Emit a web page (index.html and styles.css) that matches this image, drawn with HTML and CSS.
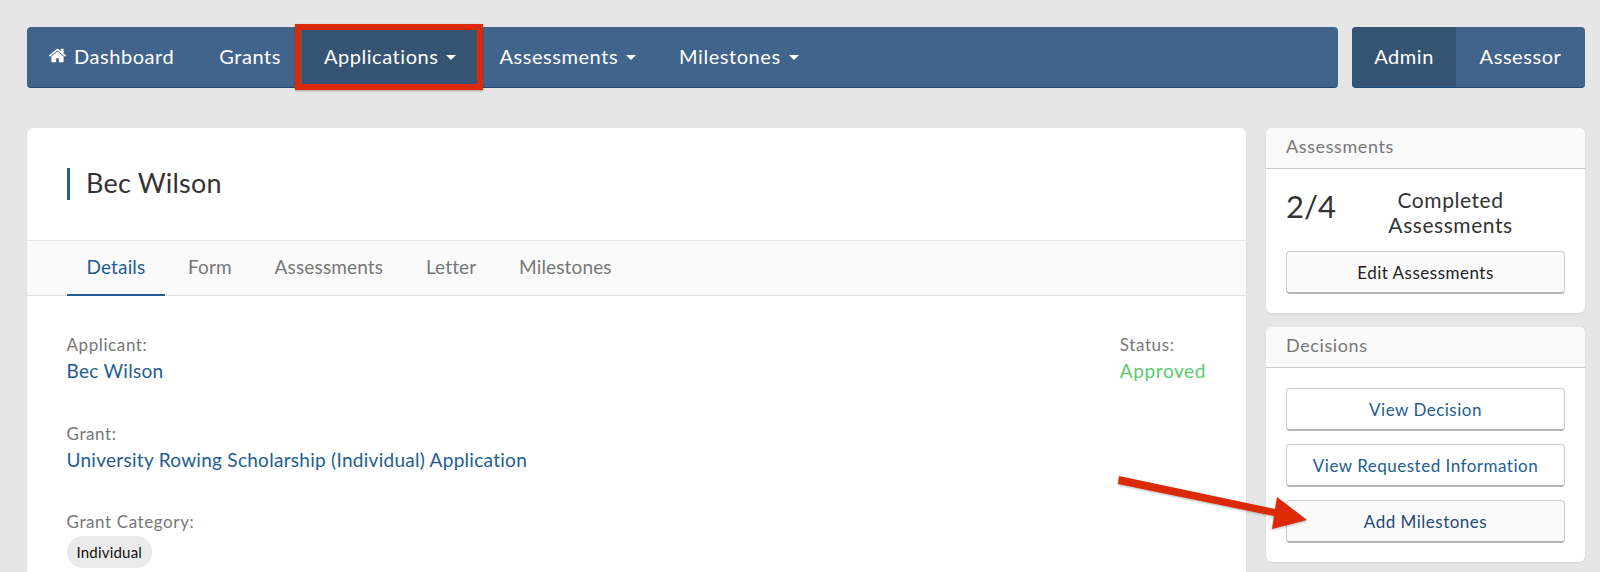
FILE: index.html
```html
<!DOCTYPE html>
<html lang="en">
<head>
  <meta charset="UTF-8" />
  <title>Bec Wilson - Application</title>
  <link rel="stylesheet" href="styles.css">
</head>
<body>
  <header class="topbar">
    <nav class="navbar navbar-main">
      <a class="nav-item nav-item-home" href="#">
        <svg class="icon-home" viewBox="0 0 1792 1792"><path d="M1472 992v480q0 26-19 45t-45 19h-384v-384h-256v384h-384q-26 0-45-19t-19-45v-480q0-1 .5-3t.5-3l575-474 575 474q1 2 1 6zm223-69l-62 74q-8 9-21 11h-3q-13 0-21-7l-692-577-692 577q-12 8-24 7-13-2-21-11l-62-74q-8-10-7-23.500t11-21.500l719-599q32-26 76-26t76 26l244 204v-195q0-14 9-23t23-9h192q14 0 23 9t9 23v408l219 182q10 8 11 21.500t-7 23.500z"/></svg>
        <span>Dashboard</span>
      </a>
      <a class="nav-item" href="#"><span>Grants</span></a>
      <a class="nav-item active highlighted" href="#"><span>Applications</span> <span class="caret"></span></a>
      <a class="nav-item" href="#"><span>Assessments</span> <span class="caret"></span></a>
      <a class="nav-item" href="#"><span>Milestones</span> <span class="caret"></span></a>
    </nav>
    <nav class="navbar navbar-role">
      <a class="nav-item active" href="#"><span>Admin</span></a>
      <a class="nav-item" href="#"><span>Assessor</span></a>
    </nav>
  </header>

  <div class="content">
    <main class="card card-main">
      <div class="page-title"><h1>Bec Wilson</h1></div>
      <ul class="tabs">
        <li class="tab active">Details</li>
        <li class="tab">Form</li>
        <li class="tab">Assessments</li>
        <li class="tab">Letter</li>
        <li class="tab">Milestones</li>
      </ul>
      <div class="details">
        <div class="details-left">
          <div class="field">
            <div class="field-label">Applicant:</div>
            <a class="field-link" href="#">Bec Wilson</a>
          </div>
          <div class="field">
            <div class="field-label">Grant:</div>
            <a class="field-link" href="#">University Rowing Scholarship (Individual) Application</a>
          </div>
          <div class="field">
            <div class="field-label">Grant Category:</div>
            <span class="pill">Individual</span>
          </div>
        </div>
        <div class="field">
          <div class="field-label">Status:</div>
          <div class="status-approved">Approved</div>
        </div>
      </div>
    </main>

    <aside class="sidebar">
      <section class="card">
        <h2 class="card-header">Assessments</h2>
        <div class="card-body card-body-summary">
          <div class="summary">
            <span class="summary-count">2/4</span>
            <span class="summary-text">Completed Assessments</span>
          </div>
          <a class="btn btn-dark" href="#">Edit Assessments</a>
        </div>
      </section>
      <section class="card">
        <h2 class="card-header">Decisions</h2>
        <div class="card-body card-body-buttons">
          <a class="btn" href="#">View Decision</a>
          <a class="btn" href="#">View Requested Information</a>
          <a class="btn btn-hover" href="#">Add Milestones</a>
        </div>
      </section>
    </aside>
  </div>

  <svg class="arrow" viewBox="0 0 1600 572" width="1600" height="572">
    <polygon points="1119,476 1275,509 1277,497 1307,520 1272,529 1274,516 1118,484" fill="#dc2a06"/>
  </svg>
</body>
</html>
```

FILE: styles.css
```css
* {
  box-sizing: border-box;
}

html, body {
  height: 100%;
}

body {
  position: relative;
  margin: 0;
  padding: 27px 15px 0 27px;
  overflow: hidden;
  background: #e6e6e6;
  font-family: Lato, "Open Sans", sans-serif;
  font-size: 18px;
  color: #333;
}

a {
  text-decoration: none;
}

.topbar {
  display: flex;
  gap: 14px;
}

.navbar {
  display: flex;
  height: 61px;
  background: #41648c;
  border-radius: 4px;
  border-bottom: 1px solid #1d4a78;
}

.navbar-main {
  flex: 1;
}

.navbar-role {
  width: 233px;
  overflow: hidden;
}

.nav-item {
  position: relative;
  display: flex;
  align-items: center;
  gap: 7px;
  padding: 0 21px 3px 22px;
  color: #fff;
  font-size: 20px;
  letter-spacing: 0.55px;
  white-space: nowrap;
}

.nav-item-home {
  padding: 0 23px 3px 21px;
}

.nav-item.active {
  background: #355474;
}

.navbar-role .nav-item {
  flex: 1;
  justify-content: center;
  padding: 0 0 3px;
}

.navbar-role .nav-item.active {
  flex: 0 0 104px;
}

.highlighted::after {
  content: "";
  position: absolute;
  top: -3px;
  bottom: -3px;
  left: -7px;
  right: -6px;
  border: 6px solid #dc2a06;
  box-shadow: 0 1px 2px rgba(0, 0, 0, 0.3);
}

.icon-home {
  width: 19px;
  height: 19px;
  fill: #fff;
}

.caret {
  width: 0;
  height: 0;
  margin-left: 1px;
  margin-top: 4px;
  border-left: 5px solid transparent;
  border-right: 5px solid transparent;
  border-top: 5px solid #fff;
}

.content {
  display: flex;
  gap: 20px;
  margin-top: 40px;
}

.card {
  background: #fff;
  border-radius: 6px;
  box-shadow: 0 1px 2px rgba(0, 0, 0, 0.08);
  overflow: hidden;
}

.card-main {
  flex: 1;
  height: 444px;
  border-radius: 6px 6px 0 0;
}

.page-title {
  height: 112px;
  padding: 40px 40px 0;
}

.page-title h1 {
  margin: 0;
  height: 32px;
  padding-left: 16px;
  border-left: 3px solid #235d92;
  font-size: 27px;
  font-weight: 400;
  letter-spacing: 0.2px;
  line-height: 30px;
  color: #333;
}

.tabs {
  display: flex;
  gap: 3.700px;
  height: 56px;
  margin: 0;
  padding: 0 0 0 40px;
  list-style: none;
  background: #fafafa;
  border-top: 1px solid #e6e6e6;
  border-bottom: 1px solid #e0e0e0;
}

.tab {
  padding: 14px 19.500px 0;
  color: #777;
  font-size: 19px;
  letter-spacing: 0.15px;
}

.tab.active {
  color: #235d92;
  border-bottom: 2px solid #235d92;
  margin-bottom: -1px;
}

.details {
  display: flex;
  justify-content: space-between;
  padding: 36px 40px 0 39.500px;
}

.field {
  margin-bottom: 36.500px;
}

.field-label {
  height: 26px;
  color: #777;
  font-size: 17px;
  letter-spacing: 0.6px;
  line-height: 26px;
}

.field-link, .status-approved {
  display: block;
  height: 26px;
  font-size: 19px;
  letter-spacing: 0.28px;
  line-height: 26px;
}

.field-link {
  color: #235d92;
}

.status-approved {
  color: #5ccb70;
  letter-spacing: 0.6px;
}

.pill {
  display: inline-block;
  height: 32px;
  margin-top: 1px;
  padding: 0 10px;
  background: #ebebeb;
  border-radius: 16px;
  color: #111;
  font-size: 15px;
  letter-spacing: 0.2px;
  line-height: 32px;
}

.sidebar {
  display: flex;
  flex-direction: column;
  gap: 14px;
  width: 319px;
}

.card-header {
  height: 41px;
  margin: 0;
  padding: 0 20px;
  background: #fafafa;
  border-bottom: 1px solid #ccc;
  color: #777;
  font-size: 18px;
  font-weight: 400;
  letter-spacing: 0.6px;
  line-height: 37px;
}

.card-body {
  padding: 20px 20px 19px;
}

.card-body-buttons {
  display: flex;
  flex-direction: column;
  gap: 13px;
}

.summary {
  display: flex;
  align-items: center;
  height: 48px;
  margin-bottom: 14px;
}

.summary-count {
  width: 60px;
  padding-bottom: 14px;
  font-size: 31px;
}

.summary-text {
  flex: 1;
  padding: 0 30px 2px 20px;
  text-align: center;
  font-size: 21px;
  letter-spacing: 0.55px;
  line-height: 25px;
}

.btn {
  display: block;
  height: 43px;
  background: #fff;
  border: 1px solid #ccc;
  border-bottom: 2px solid #b5b5b5;
  border-radius: 4px;
  color: #235d92;
  font-size: 17px;
  letter-spacing: 0.5px;
  line-height: 41px;
  text-align: center;
}

.btn-dark {
  background: #fafafa;
  color: #222;
}

.btn-hover {
  background: #fafafa;
  color: #1d4a78;
}

.arrow {
  position: absolute;
  top: 0;
  left: 0;
  pointer-events: none;
  filter: drop-shadow(0 1px 1px rgba(0, 0, 0, 0.3));
}
```
